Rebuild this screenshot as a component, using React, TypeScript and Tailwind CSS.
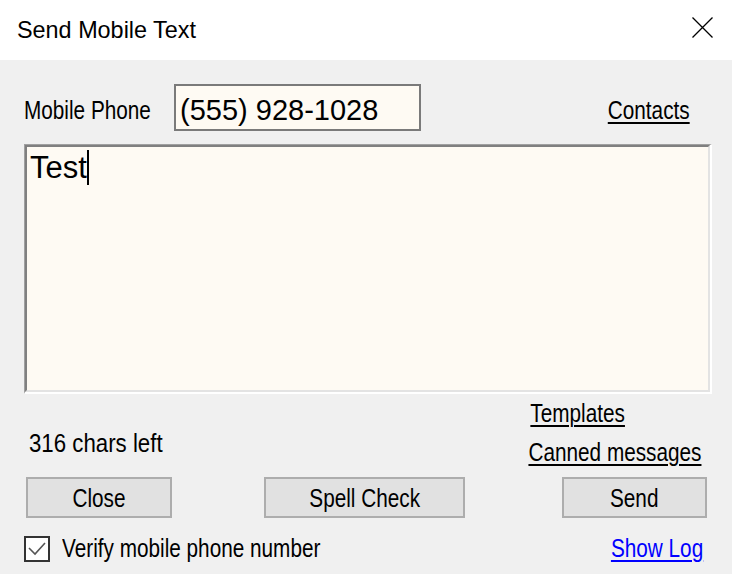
import { useState } from "react";

// labels in the dialog use a condensed face; Liberation Sans squeezed horizontally stands in for it
function N({
  children,
  origin = "origin-left",
  scale = "scale-x-[0.83]",
  className,
}: {
  children: string;
  origin?: string;
  scale?: string;
  className?: string;
}) {
  return (
    <span
      className={`inline-block whitespace-nowrap text-[25px] leading-[28px] ${origin} ${scale} ${className ?? ""}`}
    >
      {children}
    </span>
  );
}

function LinkText({ children, blue, className }: { children: string; blue?: boolean; className?: string }) {
  return (
    <N
      origin="origin-right"
      className={`underline decoration-2 underline-offset-[3px] cursor-pointer ${
        blue ? "text-[#0000ff]" : "text-black"
      } ${className ?? ""}`}
    >
      {children}
    </N>
  );
}

function Button({ label, width, className }: { label: string; width: string; className?: string }) {
  return (
    <button
      type="button"
      className={`${width} h-[41px] border-2 border-[#adadad] bg-[#e1e1e1] text-black flex items-center justify-center overflow-hidden ${className ?? ""}`}
    >
      <N origin="origin-center">{label}</N>
    </button>
  );
}

export default function App() {
  const [verify, setVerify] = useState(true);

  return (
    <div className="w-[732px] h-[574px] flex flex-col bg-[#f0f0f0] overflow-hidden font-['Liberation_Sans',Arial,sans-serif]">
      {/* title bar */}
      <div className="h-[60px] shrink-0 bg-white flex justify-between pl-[17px] pr-[19px]">
        <span className="self-center text-[23.4px] leading-[28px] text-black">Send Mobile Text</span>
        <svg className="mt-[17px]" width="21" height="21" viewBox="0 0 21 21">
          <path d="M0.5 0.5 L20.5 20.5 M20.5 0.5 L0.5 20.5" stroke="#000" strokeWidth="1.3" />
        </svg>
      </div>

      {/* body */}
      <div className="flex-1 flex flex-col pl-[24px] pr-[20px] pt-[24px]">
        {/* phone row */}
        <div className="flex items-center">
          <div className="w-[150px] shrink-0 pt-[6px] text-black">
            <N>Mobile Phone</N>
          </div>
          <div className="w-[247px] h-[47px] border-2 border-[#7a7a7a] bg-[#fefaf3] flex items-center pl-[4px] pt-[5px]">
            <span className="text-[29px] leading-[30px] text-black whitespace-nowrap">(555) 928-1028</span>
          </div>
          <div className="ml-auto mr-[22px] pt-[6px]">
            <LinkText>Contacts</LinkText>
          </div>
        </div>

        {/* message box */}
        <div className="mt-[13px] h-[250px] border-t border-l border-[#a0a0a0] border-b-2 border-r-2 border-b-white border-r-white">
          <div className="h-full border-t-2 border-l-2 border-[#808080] border-b-2 border-r-2 border-b-[#e3e3e3] border-r-[#e3e3e3] bg-[#fefaf3] pl-[3px] pt-[3px]">
            <div className="flex items-center">
              <span className="text-[31px] leading-[30px] text-black">Test</span>
              <span className="w-[2px] h-[35px] bg-black" />
            </div>
          </div>
        </div>

        {/* counters and links */}
        <div className="h-[83px] flex items-start">
          <div className="ml-[5px] mt-[35px] text-black">
            <N scale="scale-x-[0.89]">316 chars left</N>
          </div>
          <div className="ml-auto mr-[11px] mt-[5px] flex flex-col items-end gap-[9px]">
            <div className="mr-[76px]">
              <LinkText>Templates</LinkText>
            </div>
            <LinkText>Canned messages</LinkText>
          </div>
        </div>

        {/* buttons */}
        <div className="flex">
          <Button label="Close" width="w-[146px]" className="ml-[2px]" />
          <Button label="Spell Check" width="w-[201px]" className="ml-[92px]" />
          <Button label="Send" width="w-[145px]" className="ml-[97px]" />
        </div>

        {/* footer */}
        <div className="mt-[16px] flex items-center">
          <button
            type="button"
            onClick={() => setVerify(!verify)}
            className="w-[26px] h-[26px] shrink-0 border-2 border-[#333333] bg-white flex items-center justify-center"
          >
            {verify && (
              <svg width="22" height="22" viewBox="0 0 22 22">
                <path d="M3 10 L9 16 L19 5" fill="none" stroke="#555" strokeWidth="1.6" />
              </svg>
            )}
          </button>
          <div className="ml-[12px] text-black">
            <N>Verify mobile phone number</N>
          </div>
          <div className="ml-auto mr-[9px]">
            <LinkText blue>Show Log</LinkText>
          </div>
        </div>
      </div>
    </div>
  );
}
